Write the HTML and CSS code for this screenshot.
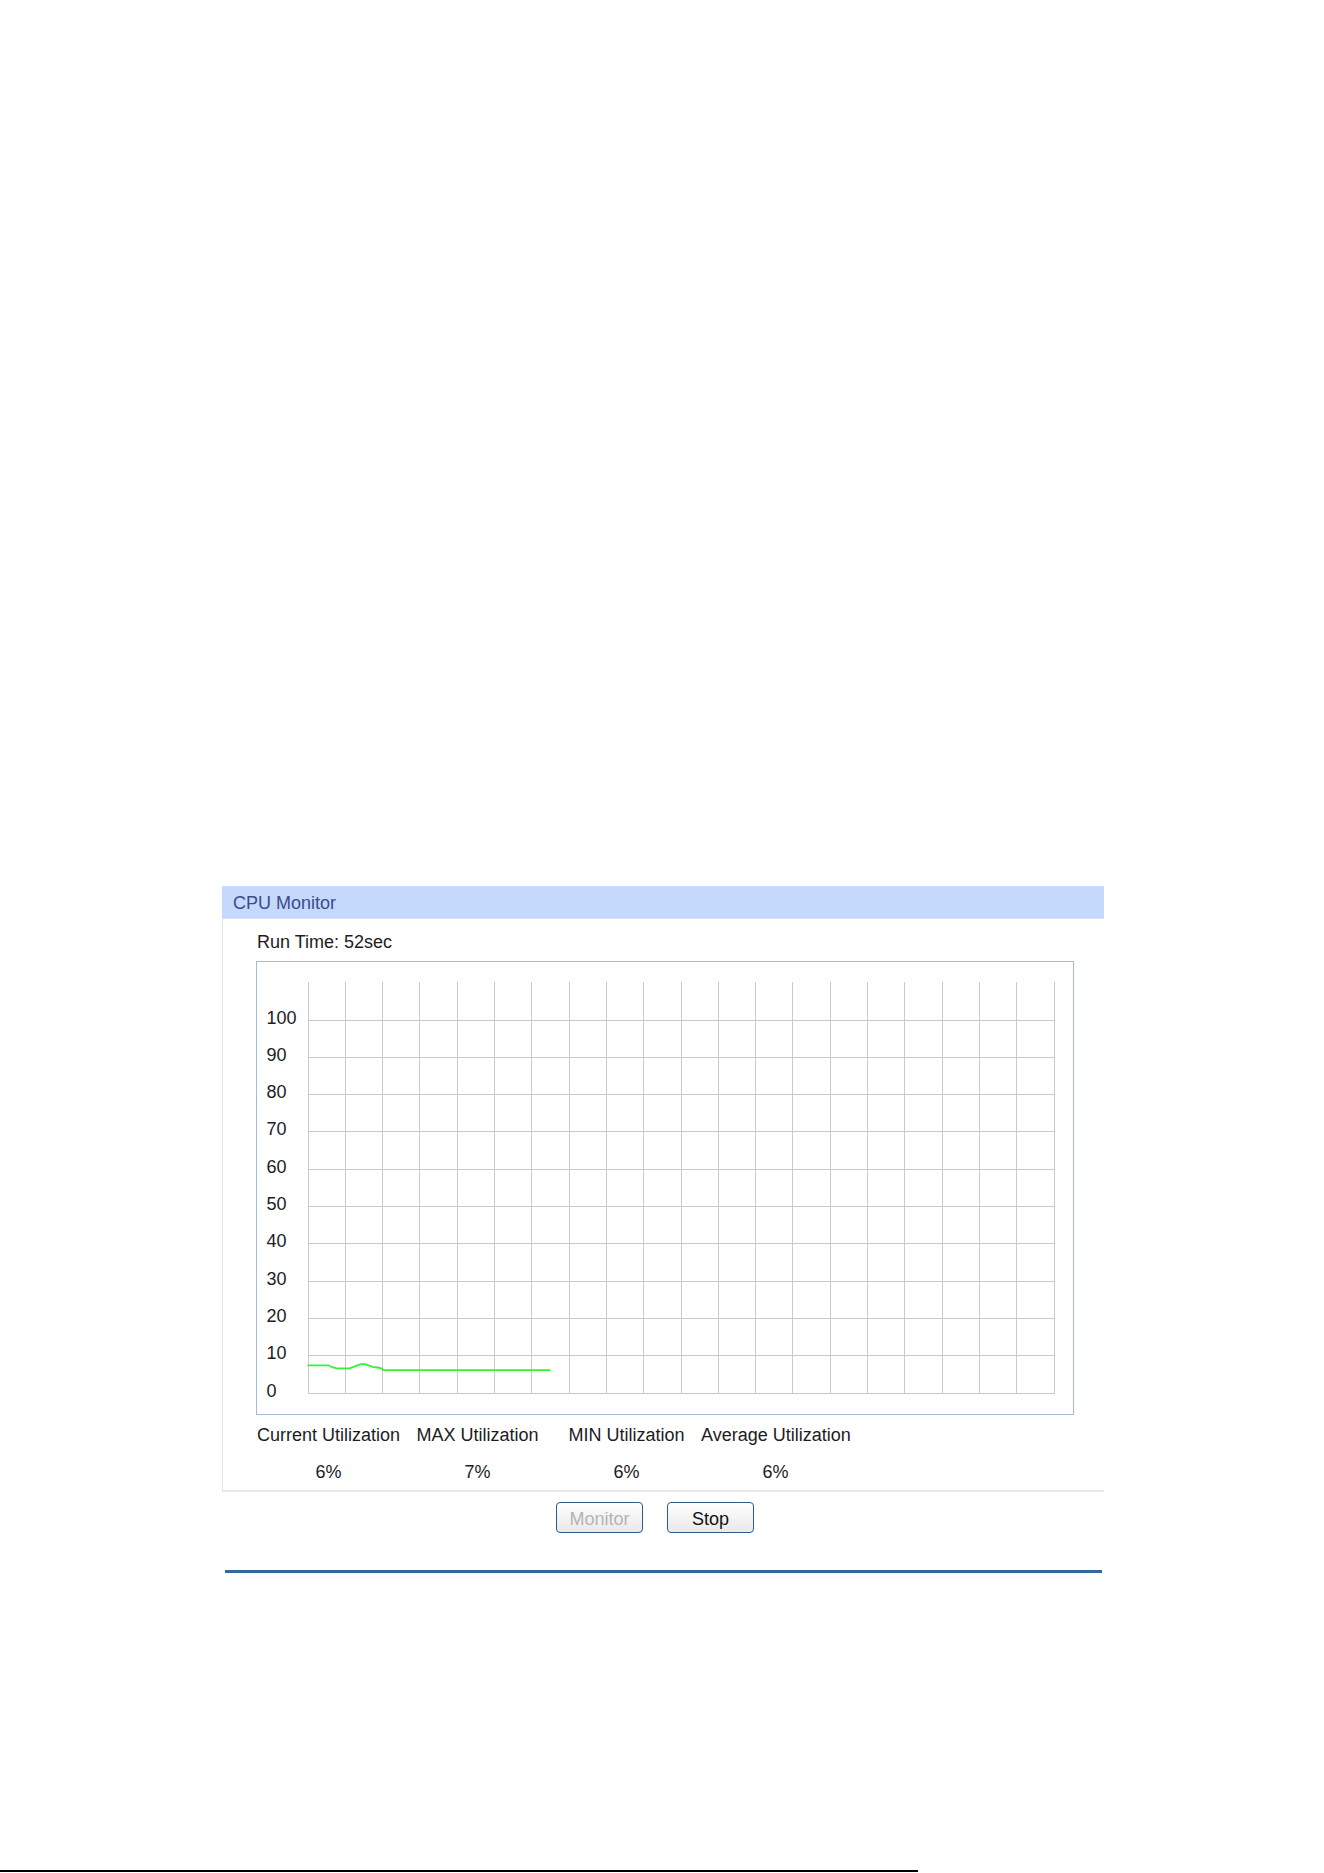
FILE: index.html
```html
<!DOCTYPE html>
<html lang="en">
<head>
    <meta charset="UTF-8">
    <title>CPU Monitor</title>
    <link rel="stylesheet" href="styles.css">
</head>
<body>
    <div class="panel">
        <div class="panel-title">CPU Monitor</div>
        <div class="panel-body">
            <div class="run-time">Run Time: <span id="runTime">52</span>sec</div>

            <div class="chart">
                <svg id="chart" width="816" height="452" viewBox="0 0 816 452">
                    <g id="grid"></g>
                    <g id="labels"></g>
                    <polyline id="usage" class="usage" points=""></polyline>
                </svg>
            </div>

            <div class="stats">
                <div>Current Utilization</div>
                <div>MAX Utilization</div>
                <div>MIN Utilization</div>
                <div>Average Utilization</div>
                <div class="value" id="current">6%</div>
                <div class="value" id="max">7%</div>
                <div class="value" id="min">6%</div>
                <div class="value" id="avg">6%</div>
            </div>
        </div>

        <div class="buttons">
            <button type="button" id="btnMonitor" disabled>Monitor</button>
            <button type="button" id="btnStop">Stop</button>
        </div>

        <div class="rule"></div>
    </div>

    <div class="page-end"></div>

    <script>
        // grid: 20 columns x 11 rows, 0..100 on the y axis
        const gridLeft = 50.5;
        const gridTop = 19.5;
        const gridBottom = 430.5;
        const cell = 37.3;
        const cols = 20;

        const svgNS = 'http://www.w3.org/2000/svg';
        const grid = document.getElementById('grid');
        const labels = document.getElementById('labels');

        function line(x1, y1, x2, y2) {
            const l = document.createElementNS(svgNS, 'line');
            l.setAttribute('x1', x1);
            l.setAttribute('y1', y1);
            l.setAttribute('x2', x2);
            l.setAttribute('y2', y2);
            grid.appendChild(l);
        }

        const gridRight = Math.round(gridLeft + cols * cell) + 0.5;

        for (let i = 0; i <= cols; i++) {
            const x = Math.round(gridLeft + i * cell) + 0.5;
            line(x, gridTop, x, gridBottom);
        }

        for (let j = 0; j <= 10; j++) {
            const y = Math.round(gridBottom - j * cell) + 0.5;
            line(gridLeft, y, gridRight, y);

            const t = document.createElementNS(svgNS, 'text');
            t.setAttribute('x', 9.5);
            t.setAttribute('y', y + 3.5);
            t.textContent = j * 10;
            labels.appendChild(t);
        }

        // samples: [x offset in px, utilization %]
        const samples = [
            [0, 7.3], [21, 7.3], [24, 6.9], [29, 6.45], [42, 6.45], [46, 6.9],
            [50, 7.3], [53, 7.6], [58, 7.6], [61, 7.3], [65, 6.9], [70, 6.7],
            [74, 6.45], [76, 6.0], [243, 6.0]
        ];

        const pts = samples.map(function (s) {
            return (gridLeft + s[0]).toFixed(1) + ',' + (gridBottom - s[1] * cell / 10).toFixed(1);
        });
        document.getElementById('usage').setAttribute('points', pts.join(' '));
    </script>
</body>
</html>
```

FILE: styles.css
```css
body {
    margin: 0;
    font-family: "Liberation Sans", Arial, sans-serif;
    font-size: 18px;
    color: #1c1c24;
    background: #fff;
}
.panel {
    margin: 886px 0 0 222px;
    width: 882px;
}
.panel-title {
    box-sizing: border-box;
    height: 33px;
    padding: 2px 0 0 11px;
    line-height: 30px;
    background: #c4d9fc;
    border-bottom: 1px solid #d9e0ea;
    color: #3a4c8a;
}
.panel-body {
    border-left: 1px solid #e2e2e2;
    border-bottom: 2px solid #e8e8e8;
}
.run-time {
    padding: 12px 0 0 34px;
    line-height: 22px;
}
.chart {
    margin: 8px 0 0 33px;
    width: 816px;
    height: 452px;
    border: 1px solid #a6bad5;
}
.chart svg {
    display: block;
}
#grid line {
    stroke: #cacaca;
    stroke-width: 1;
    shape-rendering: crispEdges;
}
#labels text {
    font-family: "Liberation Sans", Arial, sans-serif;
    font-size: 18px;
    fill: #1c1c24;
}
.usage {
    fill: none;
    stroke: #33f533;
    stroke-width: 1.8;
}
.stats {
    display: grid;
    grid-template-columns: repeat(4, 149px);
    row-gap: 15px;
    margin: 9px 0 0 31px;
    padding-bottom: 7px;
    line-height: 22px;
    text-align: center;
    white-space: nowrap;
}
.buttons {
    display: flex;
    gap: 24px;
    margin-top: 10px;
    padding-left: 334px;
}
button {
    width: 87px;
    height: 31px;
    padding: 4px 0 0;
    font-family: "Liberation Sans", Arial, sans-serif;
    font-size: 18px;
    color: #111;
    background: linear-gradient(#fefefe, #e9e9e9);
    border: 1px solid #2e5b8c;
    border-radius: 4px;
    cursor: pointer;
}
button:disabled {
    color: #b4b4b4;
    cursor: default;
}
.rule {
    margin: 37px 0 0 3px;
    width: 877px;
    height: 3px;
    background: #34689c;
}
.page-end {
    margin-top: 297px;
    width: 918px;
    height: 2px;
    background: #000;
}
```
